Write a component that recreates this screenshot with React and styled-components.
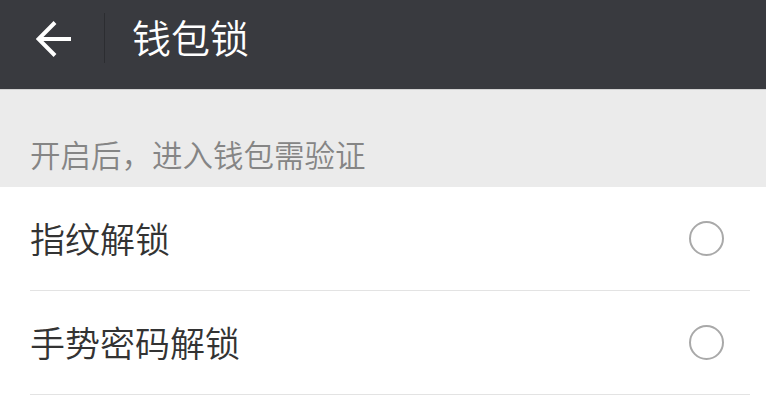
import React from "react";
import styled, { createGlobalStyle } from "styled-components";

const Global = createGlobalStyle`
  html, body { margin: 0; padding: 0; background: #ffffff; }
  body { font-family: "Noto Sans CJK SC", "Noto Sans", sans-serif; }
`;

const Page = styled.div`
  width: 766px;
  height: 400px;
  overflow: hidden;
  background: #ffffff;
`;

const Header = styled.header`
  height: 89px;
  background: #393a3f;
  border-bottom: 1px solid #d2d2d2;
  display: flex;
  align-items: center;
  box-sizing: content-box;
`;

const BackButton = styled.button`
  width: 104px;
  height: 89px;
  padding: 0 0 12px 4px;
  border: none;
  background: transparent;
  display: flex;
  align-items: center;
  justify-content: center;
  box-sizing: border-box;
`;

const VDivider = styled.div`
  width: 1px;
  height: 50px;
  margin-bottom: 13px;
  background: #2c2d31;
`;

const Title = styled.h1`
  margin: 0 0 16px 27px;
  font-size: 39px;
  font-weight: 350;
  line-height: 1;
  color: #ffffff;
`;

const SectionNote = styled.div`
  height: 97px;
  background: #ebebeb;
  display: flex;
  align-items: flex-end;
  padding: 0 0 18px 30px;
  box-sizing: border-box;
  font-size: 30.5px;
  font-weight: 350;
  line-height: 1;
  color: #858585;
`;

const List = styled.ul`
  list-style: none;
  margin: 0;
  padding: 0 16px 0 30px;
`;

const Row = styled.li`
  height: 104px;
  display: flex;
  align-items: center;
  justify-content: space-between;
  border-bottom: 1px solid #e3e3e3;
  box-sizing: border-box;
  padding-right: 26px;
`;

const Label = styled.span`
  font-size: 35px;
  font-weight: 350;
  line-height: 1;
  color: #333333;
  margin-top: -2px;
`;

const Radio = styled.span`
  width: 35px;
  height: 35px;
  border-radius: 50%;
  border: 2.5px solid #a9a9a9;
  box-sizing: border-box;
  flex-shrink: 0;
`;

const items = ["指纹解锁", "手势密码解锁"];

export default function App() {
  return (
    <Page>
      <Global />
      <Header>
        <BackButton aria-label="返回">
          <svg width="36" height="36" viewBox="0 0 36 36" fill="none">
            <path
              d="M35 18H2.5M19 1.5L2.5 18L19 34.5"
              stroke="#ffffff"
              strokeWidth="4"
              strokeLinecap="butt"
              strokeLinejoin="miter"
            />
          </svg>
        </BackButton>
        <VDivider />
        <Title>钱包锁</Title>
      </Header>
      <SectionNote>开启后，进入钱包需验证</SectionNote>
      <List>
        {items.map((t) => (
          <Row key={t}>
            <Label>{t}</Label>
            <Radio />
          </Row>
        ))}
      </List>
    </Page>
  );
}
